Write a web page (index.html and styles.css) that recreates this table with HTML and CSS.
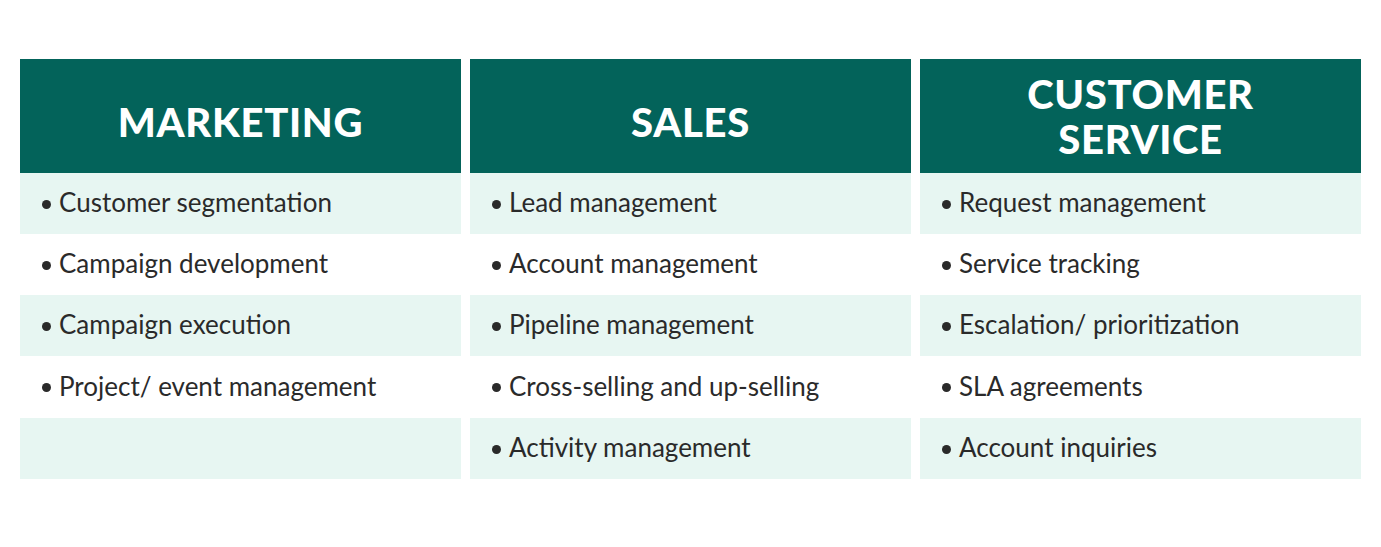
FILE: index.html
```html
<!DOCTYPE html>
<html>
<head>
<meta charset="utf-8">
<link rel="stylesheet" href="styles.css">
</head>
<body>
<div class="board">
  <div class="col">
    <div class="head"><span class="single">MARKETING</span></div>
    <ul class="rows">
      <li class="row shade">Customer segmentation</li>
      <li class="row">Campaign development</li>
      <li class="row shade">Campaign execution</li>
      <li class="row">Project/ event management</li>
      <li class="row shade empty"></li>
    </ul>
  </div>
  <div class="col">
    <div class="head"><span class="single">SALES</span></div>
    <ul class="rows">
      <li class="row shade">Lead management</li>
      <li class="row">Account management</li>
      <li class="row shade">Pipeline management</li>
      <li class="row">Cross-selling and up-selling</li>
      <li class="row shade">Activity management</li>
    </ul>
  </div>
  <div class="col">
    <div class="head"><span>CUSTOMER<br>SERVICE</span></div>
    <ul class="rows">
      <li class="row shade">Request management</li>
      <li class="row">Service tracking</li>
      <li class="row shade">Escalation/ prioritization</li>
      <li class="row">SLA agreements</li>
      <li class="row shade">Account inquiries</li>
    </ul>
  </div>
</div>
</body>
</html>
```

FILE: styles.css
```css
html, body {
  margin: 0;
  padding: 0;
  background: #ffffff;
}
body {
  font-family: Lato, "Liberation Sans", sans-serif;
}
.board {
  display: flex;
  gap: 9px;
  padding: 59px 20px 0 20px;
}
.col {
  width: 441px;
  display: flex;
  flex-direction: column;
}
.head {
  height: 114px;
  background: #03635a;
  color: #ffffff;
  display: flex;
  align-items: center;
  justify-content: center;
  text-align: center;
  font-family: Lato, "Liberation Sans", sans-serif;
  font-weight: 900;
  font-size: 40px;
  line-height: 45px;
  letter-spacing: 0.7px;
}
.head span {
  padding-top: 2px;
}
.head span.single {
  padding-top: 12px;
}
.rows {
  list-style: none;
  margin: 0;
  padding: 0;
}
.row {
  height: 61px;
  display: flex;
  align-items: center;
  padding-left: 39px;
  padding-bottom: 3px;
  box-sizing: border-box;
  font-size: 26px;
  color: #2a2a2a;
  position: relative;
}
.row:nth-child(4) {
  height: 62px;
}
.row::before {
  content: "";
  position: absolute;
  left: 22px;
  top: 50%;
  width: 9px;
  height: 9px;
  margin-top: -4px;
  border-radius: 50%;
  background: #2a2a2a;
}
.row.empty::before {
  display: none;
}
.shade {
  background: #e7f6f2;
}
```
